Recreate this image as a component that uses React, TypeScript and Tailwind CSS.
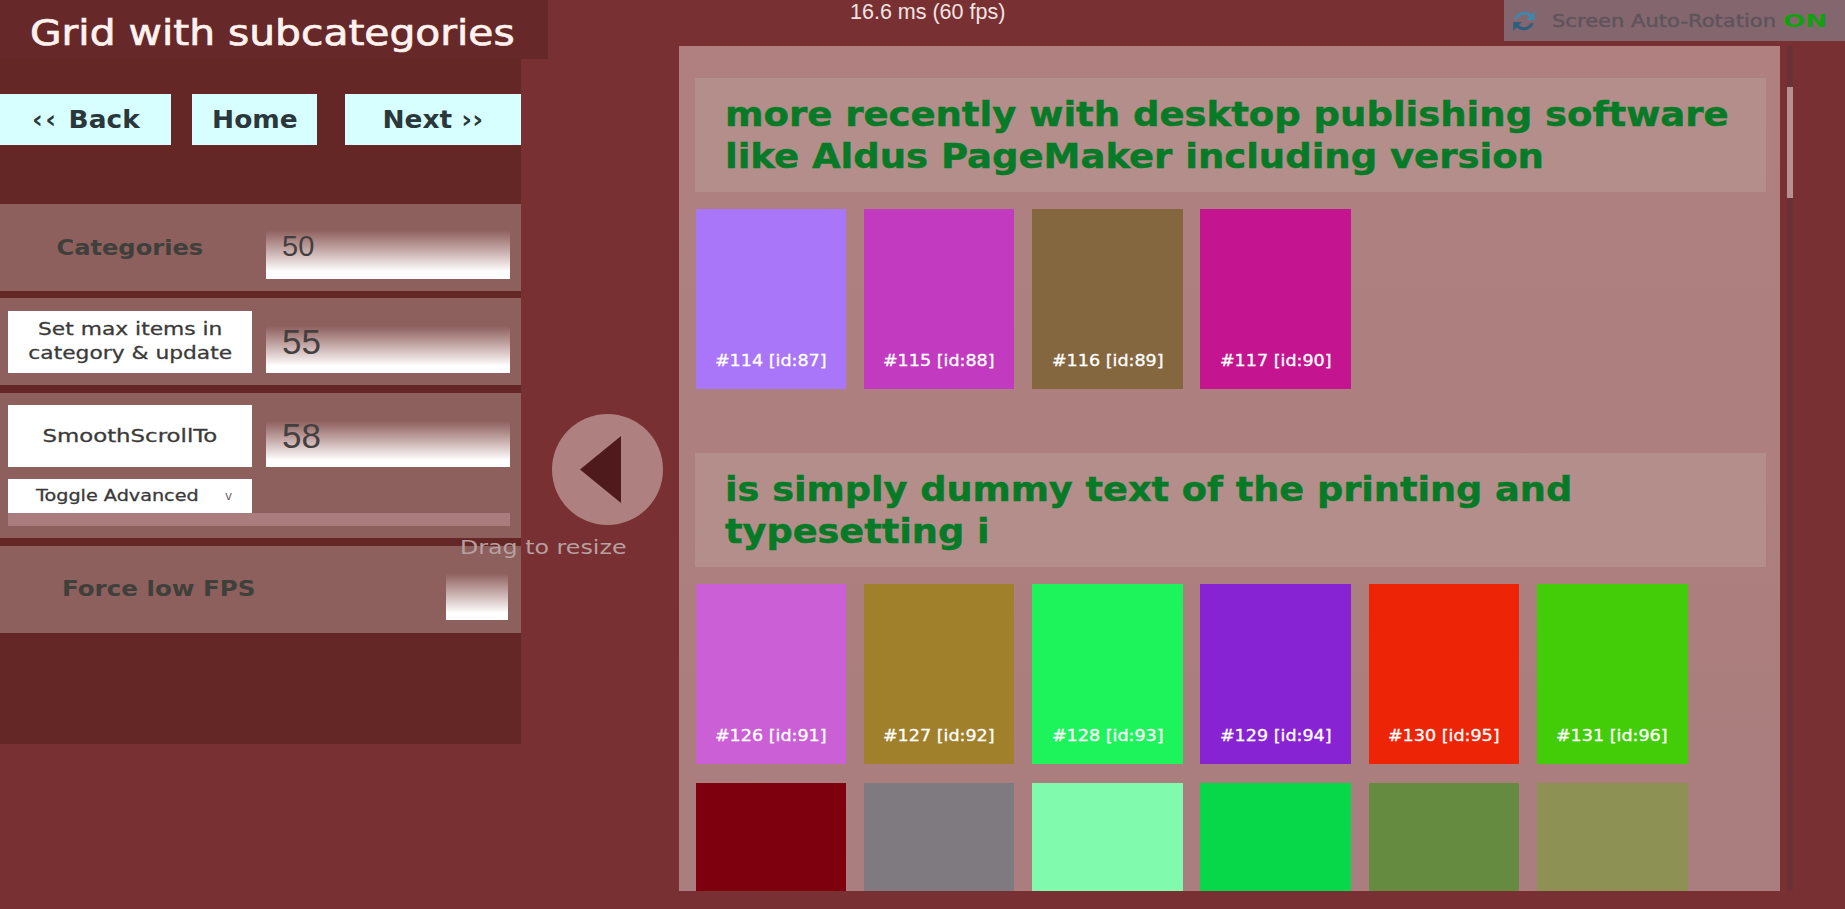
import React from "react";

const F = "font-['DejaVu_Sans',sans-serif]";

const row1 = [
  ["#a976fa", "#114 [id:87]"],
  ["#c23abf", "#115 [id:88]"],
  ["#85673f", "#116 [id:89]"],
  ["#c4148f", "#117 [id:90]"],
];
const row2 = [
  ["#cb60d6", "#126 [id:91]"],
  ["#a0802a", "#127 [id:92]"],
  ["#1df45c", "#128 [id:93]"],
  ["#8823d3", "#129 [id:94]"],
  ["#ee2407", "#130 [id:95]"],
  ["#42cd08", "#131 [id:96]"],
  ["#7e000e", ""],
  ["#7f7a80", ""],
  ["#80fbae", ""],
  ["#06d84a", ""],
  ["#658b40", ""],
  ["#8d9154", ""],
];

function Item({ color, label }: { color: string; label: string }) {
  return (
    <div className="w-[150.6px] h-[180px] flex items-end justify-center pb-[17px]" style={{ backgroundColor: color }}>
      <span className={`${F} inline-block scale-x-[1.17] text-[15px] leading-[22px] text-white whitespace-nowrap [-webkit-text-stroke:0.3px]`}>{label}</span>
    </div>
  );
}

function Section({ title, items, scale }: { title: React.ReactNode; items: string[][]; scale: string }) {
  return (
    <div className="flex flex-col gap-[17px]">
      <div className={`${F} h-[114px] w-[1071px] bg-[#b48e8b] pl-[30px] pb-[1px] flex items-center font-bold text-[34px] leading-[42px] text-[#067a26] [-webkit-text-stroke:0.5px]`}>
        <div className={`${scale} origin-left whitespace-nowrap`}>{title}</div>
      </div>
      <div className="flex flex-wrap gap-x-[17.7px] gap-y-[19px] pl-[0.5px]">
        {items.map(([c, l], i) => (
          <Item key={i} color={c} label={l} />
        ))}
      </div>
    </div>
  );
}

function NavButton({ w, children }: { w: string; children: React.ReactNode }) {
  return (
    <div className={`${w} ${F} h-[51px] bg-[#d8ffff] flex items-center justify-center font-bold text-[24px] text-[#2a383c]`}>
      <span className="inline-block scale-x-[1.1] whitespace-nowrap">{children}</span>
    </div>
  );
}

function Input({ h, value, size, shift }: { h: string; value: string; size: string; shift: string }) {
  return (
    <div className={`${h} ${size} w-[244px] bg-gradient-to-b from-[#8d5f5d] to-white to-85% pl-[16px] font-['Liberation_Sans',sans-serif] leading-none text-[#444040] flex items-start`}>
      <span className={shift}>{value}</span>
    </div>
  );
}

function WhiteButton({ scale, children }: { scale: string; children: React.ReactNode }) {
  return (
    <div className={`${F} w-[244px] h-[62px] bg-white flex items-center justify-center text-center text-[18px] leading-[24px] text-[#3a3a3a] [-webkit-text-stroke:0.3px]`}>
      <span className={`inline-block ${scale} whitespace-nowrap`}>{children}</span>
    </div>
  );
}

export default function App() {
  return (
    <div className="relative w-[1845px] h-[909px] overflow-hidden bg-[#793032] flex">
      <div className="w-[521px] shrink-0 flex flex-col">
        <div className={`${F} w-[548px] h-[59px] bg-[#662829] flex items-center pl-[30px] pt-[8px] text-[35px] text-[#fdf2ee] whitespace-nowrap relative z-10 [-webkit-text-stroke:0.7px]`}>
          <span className="inline-block scale-x-[1.165] origin-left">Grid with subcategories</span>
        </div>
        <div className="h-[685px] bg-[#652626] flex flex-col pt-[35px]">
          <div className="flex w-[521px]">
            <NavButton w="w-[171px]"><span className="tracking-[2px] mr-[1px]">‹‹</span> Back</NavButton>
            <div className="ml-[21px]"><NavButton w="w-[125px]">Home</NavButton></div>
            <div className="ml-[28px]"><NavButton w="w-[176px]">Next ››</NavButton></div>
          </div>
          <div className="mt-[59px] flex flex-col">
            <div className="h-[87px] bg-[#8d5f5d] flex items-end pb-[12px] pl-[8px]">
              <div className={`${F} w-[244px] h-[62px] pt-[2px] flex items-center justify-center font-semibold text-[21px] text-[#3f3f3b]`}>
                <span className="inline-block scale-x-[1.15]">Categories</span>
              </div>
              <div className="ml-[14px]"><Input h="h-[49px]" size="text-[29px]" shift="mt-[2px]" value="50" /></div>
            </div>
            <div className="mt-[7px] h-[87px] bg-[#8d5f5d] flex items-end pb-[12px] pl-[8px]">
              <WhiteButton scale="scale-x-[1.21]"><span className="relative -top-[1px]">Set max items in<br />category &amp; update</span></WhiteButton>
              <div className="ml-[14px]"><Input h="h-[47px]" size="text-[35px]" shift="-mt-[2px]" value="55" /></div>
            </div>
            <div className="mt-[8px] h-[145px] bg-[#8d5f5d] flex flex-col pt-[12px] pl-[8px]">
              <div className="flex items-end">
                <WhiteButton scale="scale-x-[1.27]">SmoothScrollTo</WhiteButton>
                <div className="ml-[14px]"><Input h="h-[46px]" size="text-[35px]" shift="-mt-[3px]" value="58" /></div>
              </div>
              <div className={`${F} mt-[12px] w-[244px] h-[34px] bg-white flex items-center justify-between pl-[28px] pr-[20px] text-[16px] text-[#3a3a3a] [-webkit-text-stroke:0.3px]`}>
                <span className="inline-block scale-x-[1.2] origin-left">Toggle Advanced</span>
                <span className="text-[12px] text-[#666666] [-webkit-text-stroke:0px]">v</span>
              </div>
              <div className="w-[502px] h-[13px] bg-[#a97d7d]" />
            </div>
            <div className="mt-[8px] h-[87px] bg-[#8d5f5d] flex items-end pb-[13px]">
              <div className={`${F} w-[318px] h-[47px] pb-[13px] flex items-center justify-center font-semibold text-[21px] text-[#3f3f3b]`}>
                <span className="inline-block scale-x-[1.17] whitespace-nowrap">Force low FPS</span>
              </div>
              <div className="ml-[128px] w-[62px] h-[47px] bg-gradient-to-b from-[#8d5f5d] to-white to-85%" />
            </div>
          </div>
        </div>
      </div>

      <div className="w-[158px] shrink-0 pt-[414px] pl-[31px]">
        <div className="w-[111px] h-[111px] rounded-full bg-[#ae8080] flex items-center pl-[28px]">
          <svg width="41" height="67" viewBox="0 0 41 67">
            <polygon points="41,0 41,67 0,33.5" fill="#4e1a1c" />
          </svg>
        </div>
      </div>

      <div className="mt-[46px] w-[1101px] h-[845px] overflow-hidden bg-gradient-to-b from-[#b08080] to-[#aa7e7e] px-[16px] pt-[32px] flex flex-col gap-[64px] shrink-0">
        <Section scale="scale-x-[1.088]" title={<>more recently with desktop publishing software<br />like Aldus PageMaker including version</>} items={row1} />
        <Section scale="scale-x-[1.078]" title={<>is simply dummy text of the printing and<br />typesetting i</>} items={row2} />
      </div>

      <div className="ml-[7px] mt-[46px] w-[6px] h-[845px] bg-[#6a3236] pt-[41px] shrink-0">
        <div className="h-[111px] bg-[#b89090]" />
      </div>

      <div className={`${F} absolute left-[460px] top-[536px] z-20 origin-left scale-x-[1.25] text-[19px] leading-[22px] text-[#b8a0a0] whitespace-nowrap`}>Drag to resize</div>

      <div className="absolute left-[850px] top-0 font-['Liberation_Sans',sans-serif] text-[21.5px] leading-[24px] text-[#f3e4e2] whitespace-nowrap">16.6 ms (60 fps)</div>

      <div className="absolute right-0 top-0 w-[341px] h-[41px] bg-[#84666f] flex items-center pl-[6px] gap-[14px]">
        <svg width="28" height="28" viewBox="0 0 26 26" fill="none">
          <path d="M4 11 C6 5 14 2 20 7 L23 4 V12 H15 L18 9 C14 6 9 7 7 11 Z" fill="#3f86ad" />
          <path d="M22 15 C20 21 12 24 6 19 L3 22 V14 H11 L8 17 C12 20 17 19 19 15 Z" fill="#2a5f80" />
        </svg>
        <span className={`${F} inline-block scale-x-[1.17] origin-left text-[18px] text-[#5e535a] whitespace-nowrap [-webkit-text-stroke:0.4px]`}>Screen Auto-Rotation</span>
        <span className={`${F} absolute left-[279px] inline-block scale-x-[1.45] origin-left text-[18px] font-semibold text-[#12a010] whitespace-nowrap`}>ON</span>
      </div>
    </div>
  );
}
